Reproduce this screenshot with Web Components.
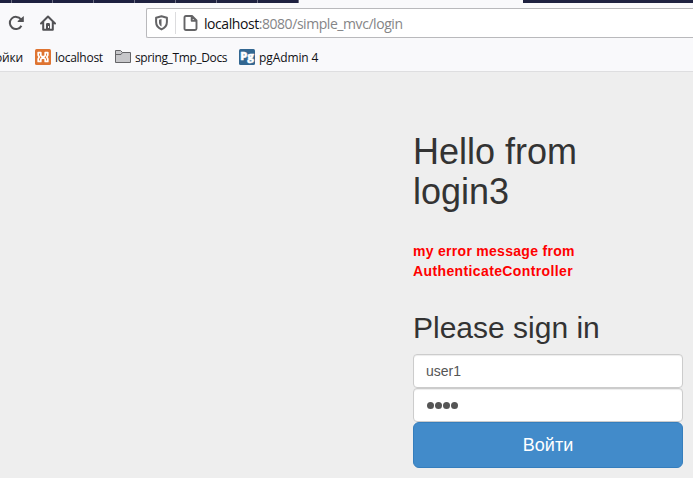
<!DOCTYPE html>
<html lang="ru"><head><meta charset="utf-8"><title>Login</title>
<style>html,body{margin:0;height:100%;overflow:hidden;background:#eee}</style></head>
<body><app-window></app-window>
<script>
const define = (name, html) => customElements.define(name, class extends HTMLElement {
  constructor() {
    super();
    const t = document.createElement('template');
    t.innerHTML = html;
    this.attachShadow({ mode: 'open' }).append(t.content.cloneNode(true));
  }
});

define('tab-strip', `<style>
:host{display:flex;justify-content:space-between;height:3px;background:#f9f9fb}
i{background:#1e2140;height:3px}
.l{width:299px;background:repeating-linear-gradient(90deg,#1e2140 0 40px,#6c6e82 40px 41px) -29px 0/328px 3px}
.r{width:170px}
</style><i class="l"></i><i class="r"></i>`);

define('address-bar', `<style>
:host{display:flex;align-items:center;box-sizing:border-box;width:547px;height:30px;background:#fff;border:1px solid #b9b9bc;border-right:0;border-radius:2px 0 0 2px;padding-left:7px}
svg{display:block;flex:none}
i{width:1px;height:22px;background:#dcdcde;margin:0 7px 0 6px}
.url{font:14px/20px "Open Sans","Noto Sans",sans-serif;color:#858587;letter-spacing:-.44px;margin:2px 0 0 6px;white-space:nowrap}
b{font-weight:400;color:#101014}
</style>
<svg width="15" height="16" viewBox="0 0 15 16"><path d="M7.500 1.200 12.900 2.700V7c0 3.500-2 6-5.400 7.400C4.100 13 2.100 10.500 2.100 7V2.700Z" fill="none" stroke="#646466" stroke-width="2" stroke-linejoin="round"/><path d="M7.500 4 5 4.700V7.300c0 1.900.8 3.300 2.500 4.300Z" fill="#646466"/></svg>
<i></i>
<svg width="15" height="16" viewBox="0 0 15 16"><path d="M3 1H9L13.500 5.500V13.500Q13.500 15 12 15H3Q1.500 15 1.500 13.500V2.500Q1.500 1 3 1ZM8.700 1V5.800H13.500" fill="none" stroke="#646466" stroke-width="1.900" stroke-linejoin="round"/></svg>
<span class="url"><b>localhost</b>:8080/simple_mvc/login</span>`);

define('nav-bar', `<style>
:host{display:flex;height:40px;padding-top:5px;box-sizing:border-box;background:#f9f9fb}
svg{display:block;margin-top:7px;flex:none}
.re{margin-left:8px}.home{margin-left:16px}address-bar{margin-left:90px}
</style>
<svg class="re" width="16" height="16" viewBox="0 0 16 16"><path d="M13.400 10.700A6.100 6.100 0 1 1 12.900 4.400" fill="none" stroke="#525255" stroke-width="2"/><path d="M15.800 1V7H9.700V6Z" fill="#525255"/></svg>
<svg class="home" width="16" height="16" viewBox="0 0 16 16"><path d="M1 8.500 8 1.500 15 8.500M3.200 7V14.700H12.800V7" fill="none" stroke="#525255" stroke-width="2" stroke-linejoin="round" stroke-linecap="round"/><path d="M6 15V9.300Q6 8 7.200 8H8.800Q10 8 10 9.300V15ZM8 11V13H9V11Z" fill="#525255" fill-rule="evenodd"/></svg>
<address-bar></address-bar>`);

define('book-mark', `<style>
:host{display:flex;align-items:center;white-space:nowrap;height:18px;font:12px/18px "Open Sans","Noto Sans",sans-serif;color:#101014}
::slotted(svg){display:block;margin-right:4px}
.label{padding-top:2px}
</style><slot name="icon"></slot><span class="label"><slot></slot></span>`);

define('bookmarks-bar', `<style>
:host{display:flex;height:29px;box-sizing:border-box;padding-top:5px;background:#f9f9fb;border-bottom:1px solid #dedee0}
book-mark{flex:none}
.a{width:40px;margin-left:-5px;letter-spacing:-.2px}.b{width:80px;letter-spacing:-.27px}.c{width:124px;letter-spacing:-.38px}.d{letter-spacing:-.1px}
</style>
<book-mark class="a">ойки</book-mark>
<book-mark class="b"><svg slot="icon" width="16" height="16" viewBox="0 0 16 16"><rect width="16" height="16" rx="1.500" fill="#df7431"/><path d="M3.200 3.600H5.800V6.600L7 7.600H9L10.200 6.600V3.600H12.800V6.200L11.800 8L12.800 9.800V12.400H10.200V10.200L9 9.200H7L5.800 10.200V12.400H3.200V9.800L4.200 8L3.200 6.200Z" fill="none" stroke="#fff" stroke-width="1.700" stroke-linejoin="round"/></svg>localhost</book-mark>
<book-mark class="c"><svg slot="icon" width="16" height="16" viewBox="0 0 16 16"><path d="M.5 13.500V1.500H5.500L7.500 3.500H15.500V13.500Z" fill="#c7c7ca" stroke="#656568"/><path d="M1 5.500H6L7.500 3.500" fill="none" stroke="#656568"/></svg>spring_Tmp_Docs</book-mark>
<book-mark class="d"><svg slot="icon" width="16" height="16" viewBox="0 0 16 16"><rect width="16" height="16" rx="1.500" fill="#336791"/><text x="8" y="10.500" text-anchor="middle" textLength="13.500" lengthAdjust="spacingAndGlyphs" font-family="Open Sans" font-weight="800" font-size="10" fill="#fff" stroke="#fff" stroke-width=".4">Pg</text></svg>pgAdmin 4</book-mark>`);

define('form-field', `<style>
:host{display:block;box-sizing:border-box;height:34px;padding:6px 12px;background:#fff;border:1px solid #ccc;border-radius:4px;box-shadow:inset 0 1px 1px rgba(0,0,0,.075);font-size:14px;line-height:20px;color:#555}
</style><slot></slot>`);

define('submit-button', `<style>
:host{display:block}
button{display:block;width:100%;height:46px;padding:0;border:1px solid #357ebd;border-radius:6px;background:#428bca;color:#fff;font:18px/24px "Liberation Sans",Arial,sans-serif}
</style><button><slot></slot></button>`);

define('login-form', `<style>
:host{display:block;width:270px;margin-left:413px;padding-top:60px;font:14px/20px "Liberation Sans",Arial,sans-serif;color:#333}
h1,h2{font-weight:400;margin:0}
h1{font-size:36px;line-height:40px;width:200px}
p{margin:29px 0 0;font-weight:700;color:#f00;width:200px;letter-spacing:.29px}
p span{letter-spacing:.38px}
h2{font-size:30px;line-height:33px;margin:30px 0 10px}
.dots{display:flex;gap:1px;height:20px;align-items:center;margin-left:1px}
.dots i{width:7px;height:7px;border-radius:50%;background:#555}
</style>
<h1>Hello from login3</h1>
<p>my error message from <span>AuthenticateController</span></p>
<h2>Please sign in</h2>
<form-field>user1</form-field>
<form-field><span class="dots"><i></i><i></i><i></i><i></i></span></form-field>
<submit-button>Войти</submit-button>`);

define('app-window', `<style>:host{display:block;width:693px;height:478px;overflow:hidden;background:#eee}</style>
<tab-strip></tab-strip><nav-bar></nav-bar><bookmarks-bar></bookmarks-bar><login-form></login-form>`);
</script></body></html>
